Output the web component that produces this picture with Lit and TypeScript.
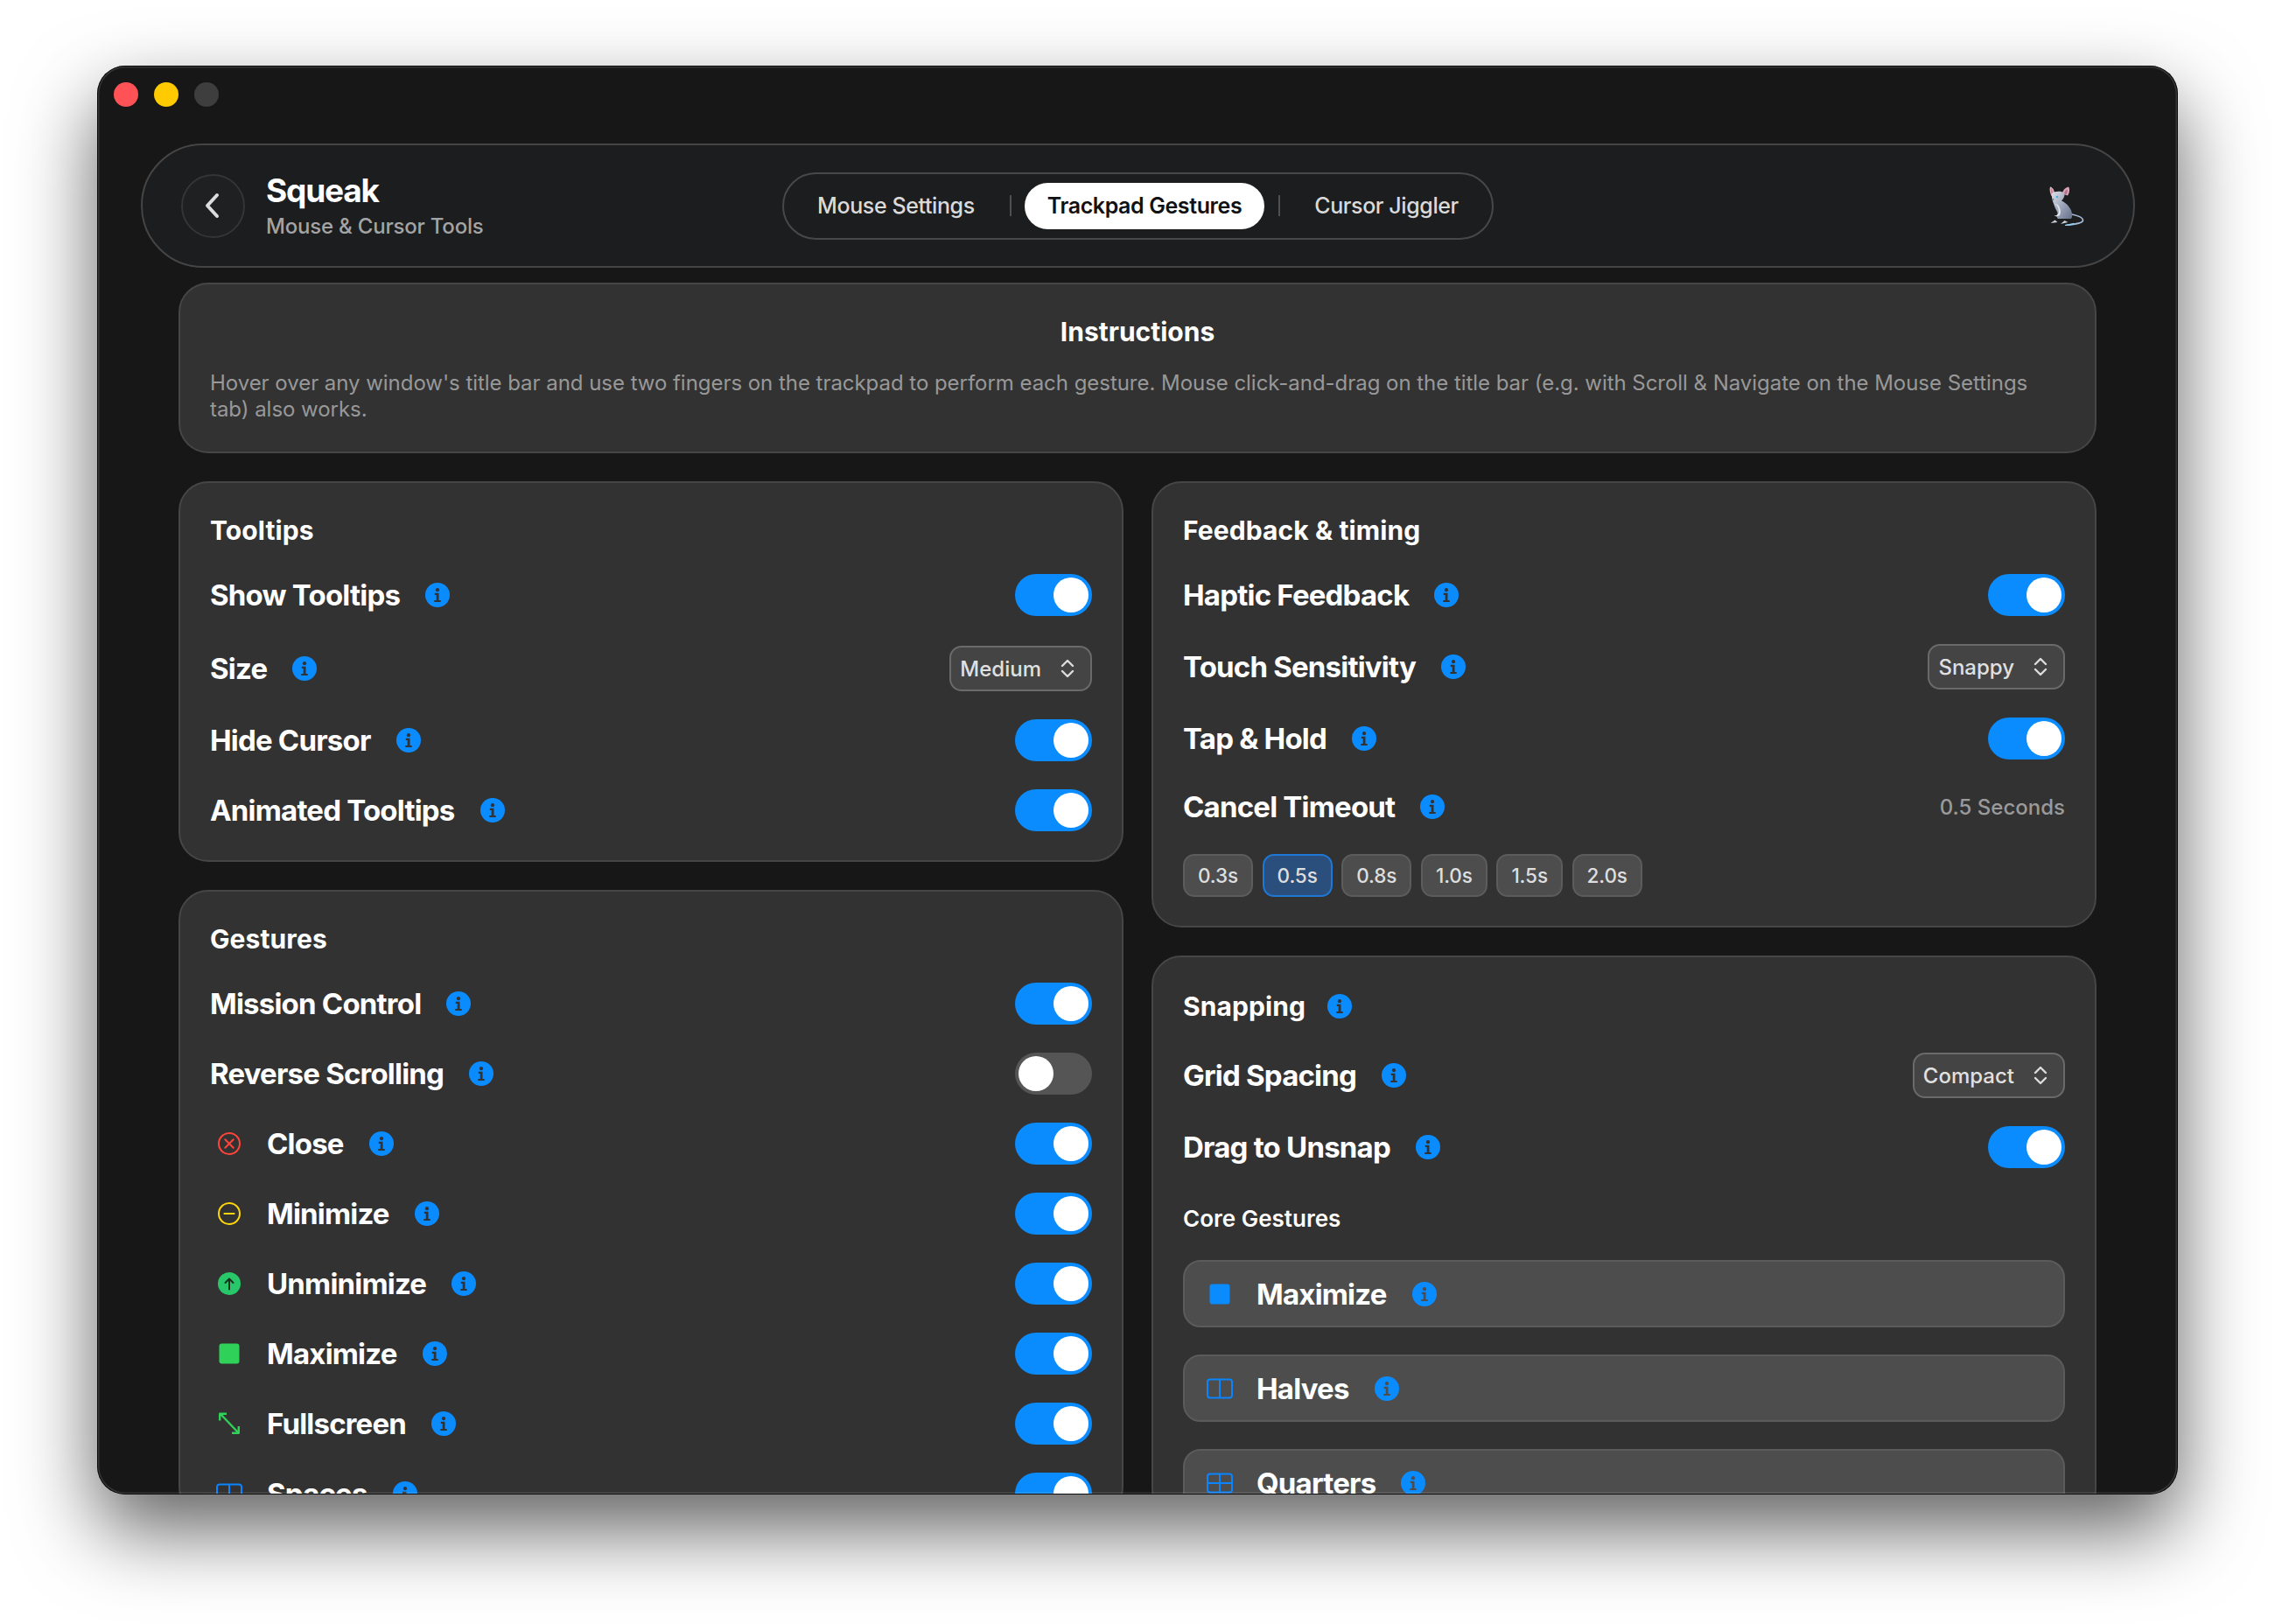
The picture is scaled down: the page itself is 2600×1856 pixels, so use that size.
import { LitElement, html, css } from "lit";
import { customElement } from "lit/decorators.js";

const info = () => html`<svg class="info" viewBox="0 0 28 28"><circle cx="14" cy="14" r="14" fill="#0a8cff"></circle><circle cx="14" cy="8.2" r="2.1" class="cut"></circle><path class="cut" d="M10.8 11.8h4.7v8.2h2.2v2.1h-7.4V20h2.4v-6.1h-1.9z"></path></svg>`;

const chevrons = html`<svg class="updown" viewBox="0 0 16 22"><path d="M2 8l6-6 6 6M2 14l6 6 6-6" fill="none" stroke="#dcdcdc" stroke-width="2.4" stroke-linecap="round" stroke-linejoin="round"></path></svg>`;

const icons: Record<string, unknown> = {
  close: html`<svg class="ic" viewBox="0 0 30 30"><circle cx="15" cy="15" r="12" fill="none" stroke="#ff453a" stroke-width="2"></circle><path d="M10.3 10.3l9.4 9.4M19.7 10.3l-9.4 9.4" stroke="#ff453a" stroke-width="2" stroke-linecap="round"></path></svg>`,
  min: html`<svg class="ic" viewBox="0 0 30 30"><circle cx="15" cy="15" r="12" fill="none" stroke="#ffd60a" stroke-width="2"></circle><path d="M9.5 15h11" stroke="#ffd60a" stroke-width="2.2" stroke-linecap="round"></path></svg>`,
  unmin: html`<svg class="ic" viewBox="0 0 30 30"><circle cx="15" cy="15" r="13" fill="#28c76a"></circle><path d="M15 21.5V9.5M10.5 14l4.5-4.5 4.5 4.5" fill="none" stroke="#17301f" stroke-width="2" stroke-linecap="round" stroke-linejoin="round"></path></svg>`,
  max: html`<svg class="ic" viewBox="0 0 30 30"><rect x="3.5" y="3.5" width="23" height="23" rx="3" fill="#30d158"></rect></svg>`,
  full: html`<svg class="ic" viewBox="0 0 30 30"><path d="M4.5 3.5l21 22M4.2 11.500V3.700h7.800M25.800 18v7.800h-7.800" fill="none" stroke="#30d158" stroke-width="2.4" stroke-linejoin="round"></path></svg>`,
  spaces: html`<svg class="ic" viewBox="0 0 30 30"><rect x="1" y="4.500" width="28" height="21" rx="3" fill="none" stroke="#0a84ff" stroke-width="2"></rect><path d="M15 4.500v21" stroke="#0a84ff" stroke-width="2"></path></svg>`,
  bluemax: html`<svg class="ic" viewBox="0 0 30 30"><rect x="3.500" y="3.500" width="23" height="23" rx="3" fill="#0a8cff"></rect></svg>`,
  quarters: html`<svg class="ic" viewBox="0 0 30 30"><rect x="1" y="4.500" width="28" height="21" rx="3" fill="none" stroke="#0a84ff" stroke-width="2"></rect><path d="M15 4.500v21M1 15h28" stroke="#0a84ff" stroke-width="2"></path></svg>`,
};

const mouseLogo = html`<svg class="mouse" viewBox="0 0 40 45">
  <defs>
    <linearGradient id="fur" x1="0" y1="0" x2="1" y2="1"><stop offset="0" stop-color="#dfe1ea"></stop><stop offset=".55" stop-color="#98a1b6"></stop><stop offset="1" stop-color="#66708a"></stop></linearGradient>
  </defs>
  <path d="M26 32c5 1 12 3 12.500 6.500C39 42 30 43 19 44.500" fill="none" stroke="#a9bdd8" stroke-width="1.700" stroke-linecap="round"></path>
  <path d="M28 42.800c-3 .7-6 1.200-9 1.700" fill="none" stroke="#8fd0f5" stroke-width="1.500" stroke-linecap="round"></path>
  <path d="M1 .5C4 1 6.500 5 6 10L2.500 11C.8 7.500 0 3.500 1 .5z" fill="#e0b4c4"></path>
  <path d="M2 2c1.500 1 2.500 4 2.300 7L3 9.500C2 7 1.700 4.500 2 2z" fill="#c9808f"></path>
  <path d="M22 .5c1.500 2 1.500 6.500-1 10l-6-2C15 5 18 1.500 22 .5z" fill="#d9a8bc"></path>
  <path d="M20.500 3c.7 2 .3 4.500-1 6.500l-2.500-1C17.300 6.500 18.500 4.500 20.500 3z" fill="#b9708a"></path>
  <path d="M3 8c4-3 11-3 14-.5 1.500 2.500-.5 6.500-3 9 5 2 9 6.500 11 11 1.500 4 1.800 7.500 0 9.500H10l-1-1 .5-6-3-6C5 19 4 18 3.500 15 3 12 2.500 10 3 8z" fill="url(#fur)"></path>
  <path d="M6.500 20c2.500 1.500 4 4 4 7 1 3-.5 5-2 6l-3 .8 3.500.8 3-1.600c1.500-3 1-6.500-.5-9.500C10.500 21 8.500 19.500 6.500 20z" fill="#e4e6ee"></path>
  <circle cx="9" cy="12" r="1.300" fill="#3fb4dc"></circle>
  <circle cx="4.500" cy="15" r=".9" fill="#707a90"></circle>
  <path d="M1.500 42l5-3.500 3 2.500zM13 43l4.500-4 4 2z" fill="#cdd1dd"></path>
</svg>`;

type Row = { l: string; k?: "toggle" | "off" | "select" | "value"; v?: string; ic?: string };

@customElement("app-root")
export class AppRoot extends LitElement {
  static styles = css`
    :host { display: block; width: 2600px; height: 1856px; box-sizing: border-box; padding: 75px 111px 0; background: #fff; font-family: Inter, "Noto Sans", sans-serif; color: #fff; overflow: hidden; }
    .window { width: 2378px; height: 1633px; border-radius: 32px; background: #171717; box-shadow: 0 40px 90px rgba(0,0,0,.62); position: relative; display: flex; flex-direction: column; overflow: hidden; }
    .rim { position: absolute; inset: 0; border-radius: 32px; box-shadow: inset 0 0 0 1px #0b0b0b, inset 0 0 0 2.500px rgba(255,255,255,.13); pointer-events: none; }
    .lights { display: flex; gap: 18px; padding: 19px 0 0 19px; height: 70px; box-sizing: border-box; flex: none; }
    .lights i { width: 28px; height: 28px; border-radius: 50%; }
    .lights .r { background: #ff5257; } .lights .y { background: #ffcb00; } .lights .g { background: #3e3e3e; }
    .header { flex: none; margin: 19px 49px 0 50px; height: 142px; box-sizing: border-box; border: 2px solid #454545; border-radius: 71px; background: #1c1d1e; display: grid; grid-template-columns: 1fr auto 1fr; align-items: center; padding: 0 44px; }
    .brand { display: flex; align-items: center; gap: 24px; }
    .back { width: 73px; height: 73px; box-sizing: border-box; border-radius: 50%; border: 2px solid #333536; background: #1e2021; display: flex; align-items: center; justify-content: center; }
    .back svg { width: 20px; height: 30px; margin-left: -3px; }
    .name { font-size: 37px; line-height: 44px; font-weight: 700; letter-spacing: -1.2px; }
    .sub { font-size: 24px; line-height: 30px; font-weight: 500; letter-spacing: -.2px; color: #a4a4a4; margin-top: 4px; }
    .tabs { display: flex; align-items: center; height: 77px; box-sizing: border-box; border: 2px solid #484848; border-radius: 39px; padding: 0 14px; font-size: 25px; font-weight: 500; letter-spacing: -.4px; color: #dadada; }
    .tab { padding: 0 24px; height: 53px; line-height: 53px; border-radius: 27px; white-space: nowrap; }
    .tab.on { background: #fff; color: #111; font-weight: 600; padding: 0 26px; }
    .sep { width: 2px; height: 24px; background: #505050; margin: 0 15px 0 16px; }
    .logoBox { justify-self: end; display: flex; margin-right: 12px; }
    .mouse { width: 40px; height: 45px; }
    .content { flex: 1; min-height: 0; padding: 17px 93px 0; overflow: hidden; }
    .card { box-sizing: border-box; border: 2px solid #464646; border-radius: 34px; background: #323232; padding: 36px 34px 0; }
    .inst { height: 195px; padding-top: 34px; --cut: #323232; }
    .inst h2 { margin: 0; text-align: center; font-size: 30px; line-height: 40px; font-weight: 700; }
    .inst p { margin: 24px 0 0; font-size: 24px; line-height: 30px; letter-spacing: -.04px; color: #989898; font-weight: 400; }
    .cols { display: grid; grid-template-columns: 1080px 1080px; gap: 32px; margin-top: 32px; align-items: start; }
    .col { display: flex; flex-direction: column; gap: 32px; }
    .stack { display: flex; flex-direction: column; gap: 32px; --cut: #323232; }
    .pad { height: 1px; }
    .title { font-size: 30px; line-height: 36px; font-weight: 700; letter-spacing: .1px; display: flex; align-items: center; gap: 25px; }
    .title.tallT { height: 39px; }
    .row { display: flex; align-items: center; justify-content: space-between; height: 48px; flex: none; }
    .left { display: flex; align-items: center; }
    .lab { font-size: 33px; font-weight: 700; letter-spacing: -.8px; white-space: nowrap; }
    .info { width: 28px; height: 28px; margin-left: 29px; flex: none; }
    .title .info { margin-left: 0; }
    .cut { fill: var(--cut); }
    .ic { width: 30px; height: 30px; margin: 0 28px 0 7px; flex: none; }
    .toggle { width: 88px; height: 48px; border-radius: 24px; background: #0a8cff; display: flex; align-items: center; justify-content: flex-end; padding: 0 4px; box-sizing: border-box; }
    .toggle i { width: 40px; height: 40px; border-radius: 50%; background: #fff; }
    .toggle.off { background: #555; justify-content: flex-start; }
    .select { height: 52px; box-sizing: border-box; border: 2px solid #6a6a6a; border-radius: 14px; background: #444; display: flex; align-items: center; padding: 0 18px 0 10px; gap: 22px; font-size: 24px; font-weight: 500; color: #e0e0e0; }
    .updown { width: 16px; height: 22px; }
    .tall { height: 52px; }
    .nudge { margin-top: 2px; }
    .val { font-size: 24px; font-weight: 500; color: #9a9a9a; }
    .timeout { height: 44px; }
    .chips { display: flex; gap: 10.600px; }
    .chip { box-sizing: border-box; height: 49px; line-height: 45px; border: 2px solid #5c5c5c; border-radius: 13px; background: #4d4d4d; padding: 0 15px; font-size: 22.500px; font-weight: 500; letter-spacing: -.1px; color: #dedede; }
    .chip.on { background: #2a4f7c; border-color: #1f78d6; }
    .core { font-size: 26px; line-height: 32px; font-weight: 600; margin-top: 10px; }
    .gbox { height: 77px; box-sizing: border-box; border: 2px solid #5b5b5b; border-radius: 20px; background: #4d4d4d; display: flex; align-items: center; padding: 0 0 0 25px; --cut: #4d4d4d; flex: none; }
    .gbox .ic { margin: 0 27px 0 0; }
    .list { display: flex; flex-direction: column; gap: 31px; margin-top: -1px; }
  `;

  private renderRow(r: Row, extra = "") {
    return html`<div class="row ${r.k === "select" ? "tall" : ""} ${extra}">
      <div class="left">${r.ic ? icons[r.ic] : ""}<span class="lab">${r.l}</span>${info()}</div>
      ${r.k === "toggle" ? html`<div class="toggle"><i></i></div>` : ""}
      ${r.k === "off" ? html`<div class="toggle off"><i></i></div>` : ""}
      ${r.k === "select" ? html`<div class="select">${r.v}${chevrons}</div>` : ""}
      ${r.k === "value" ? html`<div class="val">${r.v}</div>` : ""}
    </div>`;
  }

  render() {
    const gestures: Row[] = [
      { l: "Mission Control", k: "toggle" },
      { l: "Reverse Scrolling", k: "off" },
      { l: "Close", k: "toggle", ic: "close" },
      { l: "Minimize", k: "toggle", ic: "min" },
      { l: "Unminimize", k: "toggle", ic: "unmin" },
      { l: "Maximize", k: "toggle", ic: "max" },
      { l: "Fullscreen", k: "toggle", ic: "full" },
      { l: "Spaces", k: "toggle", ic: "spaces" },
    ];
    const feedback: Row[] = [
      { l: "Haptic Feedback", k: "toggle" },
      { l: "Touch Sensitivity", k: "select", v: "Snappy" },
      { l: "Tap & Hold", k: "toggle" },
    ];
    const chips = ["0.3s", "0.5s", "0.8s", "1.0s", "1.5s", "2.0s"];
    const core = [
      { l: "Maximize", ic: "bluemax" },
      { l: "Halves", ic: "spaces" },
      { l: "Quarters", ic: "quarters" },
    ];
    return html`<div class="window">
      <div class="lights"><i class="r"></i><i class="y"></i><i class="g"></i></div>
      <div class="header">
        <div class="brand">
          <div class="back"><svg viewBox="0 0 20 30"><path d="M16 3L5 15l11 12" fill="none" stroke="#dcdcdc" stroke-width="4" stroke-linecap="round" stroke-linejoin="round"></path></svg></div>
          <div><div class="name">Squeak</div><div class="sub">Mouse &amp; Cursor Tools</div></div>
        </div>
        <div class="tabs">
          <div class="tab">Mouse Settings</div><div class="sep"></div>
          <div class="tab on">Trackpad Gestures</div><div class="sep"></div>
          <div class="tab">Cursor Jiggler</div>
        </div>
        <div class="logoBox">${mouseLogo}</div>
      </div>
      <div class="content">
        <div class="card inst">
          <h2>Instructions</h2>
          <p>Hover over any window's title bar and use two fingers on the trackpad to perform each gesture. Mouse click-and-drag on the title bar (e.g. with Scroll &amp; Navigate on the Mouse Settings tab) also works.</p>
        </div>
        <div class="cols">
          <div class="col">
            <div class="card stack">
              <div class="title">Tooltips</div>
              ${this.renderRow({ l: "Show Tooltips", k: "toggle" })}
              ${this.renderRow({ l: "Size", k: "select", v: "Medium" }, "nudge")}
              ${this.renderRow({ l: "Hide Cursor", k: "toggle" })}
              ${this.renderRow({ l: "Animated Tooltips", k: "toggle" })}
              <div class="pad"></div>
            </div>
            <div class="card stack"><div class="title">Gestures</div>${gestures.map((r) => this.renderRow(r))}</div>
          </div>
          <div class="col">
            <div class="card stack">
              <div class="title">Feedback &amp; timing</div>
              ${feedback.map((r) => this.renderRow(r))}
              ${this.renderRow({ l: "Cancel Timeout", k: "value", v: "0.5 Seconds" }, "timeout")}
              <div class="chips">${chips.map((c) => html`<div class="chip ${c === "0.5s" ? "on" : ""}">${c}</div>`)}</div>
              <div class="pad"></div>
            </div>
            <div class="card stack">
              <div class="title tallT">Snapping ${info()}</div>
              ${this.renderRow({ l: "Grid Spacing", k: "select", v: "Compact" }, "nudge")}
              ${this.renderRow({ l: "Drag to Unsnap", k: "toggle" })}
              <div class="core">Core Gestures</div>
              <div class="list">${core.map((c) => html`<div class="gbox">${icons[c.ic]}<span class="lab">${c.l}</span>${info()}</div>`)}</div>
            </div>
          </div>
        </div>
      </div>
      <div class="rim"></div>
    </div>`;
  }
}
